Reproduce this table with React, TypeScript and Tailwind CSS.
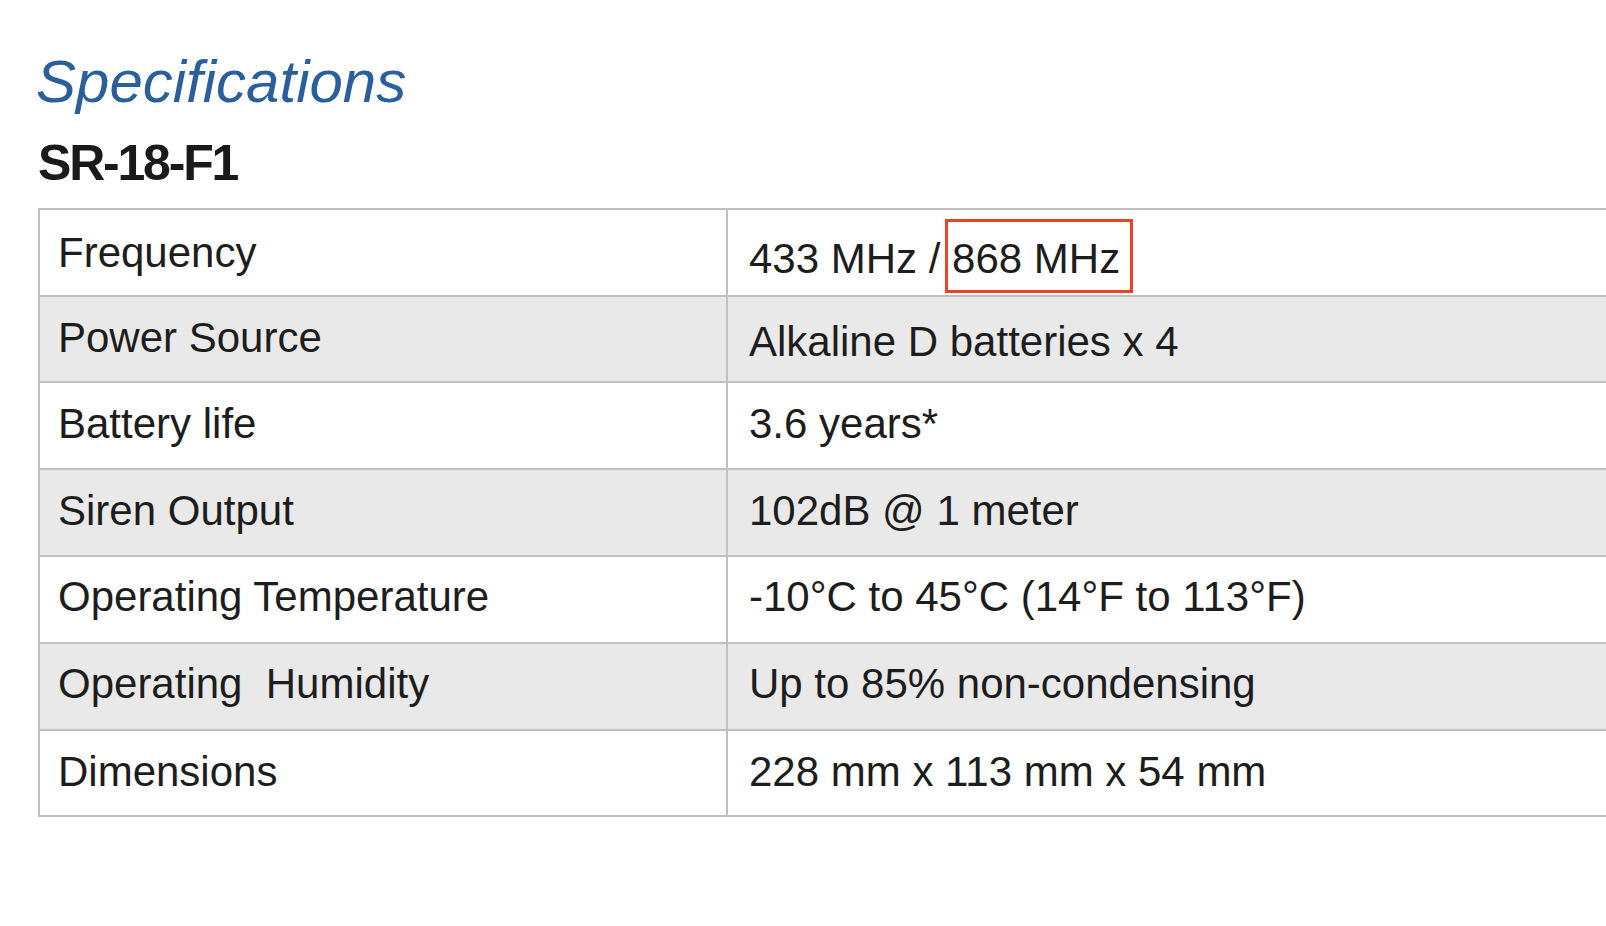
const rows = [
  { label: 'Frequency', value: '433 MHz / ', mark: '868 MHz', h: 'h-[87px]', lp: 'pt-[22px]', vp: 'pt-[28px]' },
  { label: 'Power Source', value: 'Alkaline D batteries x 4', h: 'h-[86px]', lp: 'pt-[20px]', vp: 'pt-[24px]' },
  { label: 'Battery life', value: '3.6 years*', h: 'h-[87px]', lp: 'pt-[20px]', vp: 'pt-[20px]' },
  { label: 'Siren Output', value: '102dB @ 1 meter', h: 'h-[87px]', lp: 'pt-[20px]', vp: 'pt-[20px]' },
  { label: 'Operating Temperature', value: '-10°C to 45°C (14°F to 113°F)', h: 'h-[87px]', lp: 'pt-[19px]', vp: 'pt-[19px]' },
  { label: 'Operating\u00a0 Humidity', value: 'Up to 85% non-condensing', h: 'h-[87px]', lp: 'pt-[19px]', vp: 'pt-[19px]' },
  { label: 'Dimensions', value: '228 mm x 113 mm x 54 mm', h: 'h-[86px]', lp: 'pt-[20px]', vp: 'pt-[20px]' },
]

export default function App() {
  return (
    <div className="h-[926px] w-[1606px] overflow-hidden bg-white pt-[52px] pl-[38px] font-['Liberation_Sans',Arial,sans-serif] text-[#1d1d1d]">
      <h1 className="ml-[-2px] text-[60px] leading-none italic text-[#2b5f9b]">Specifications</h1>
      <h2 className="mt-[26px] text-[50px] leading-none font-bold tracking-[-2.2px] text-[#1a1a1a]">SR-18-F1</h2>

      <div className="mt-[20px] w-[1700px] border-t-2 border-l-2 border-[#c0c0c0]">
        {rows.map((r, i) => (
          <div
            key={r.label}
            className={`flex border-b-2 border-[#c0c0c0] ${r.h} ${i % 2 === 1 ? 'bg-[#e9e9e9]' : 'bg-white'}`}
          >
            <div className={`w-[688px] shrink-0 border-r-2 border-[#c0c0c0] pl-[18px] text-[42px] leading-none ${r.lp}`}>
              {r.label}
            </div>
            <div className={`flex-1 pl-[21px] text-[42px] leading-none whitespace-pre ${r.vp}`}>
              {r.value}
              {r.mark && (
                <span className="relative inline-block">
                  {r.mark}
                  <span className="pointer-events-none absolute -top-[19px] -bottom-[13px] -left-[7px] -right-[13px] border-[3px] border-[#e8432b]" />
                </span>
              )}
            </div>
          </div>
        ))}
      </div>
    </div>
  )
}
